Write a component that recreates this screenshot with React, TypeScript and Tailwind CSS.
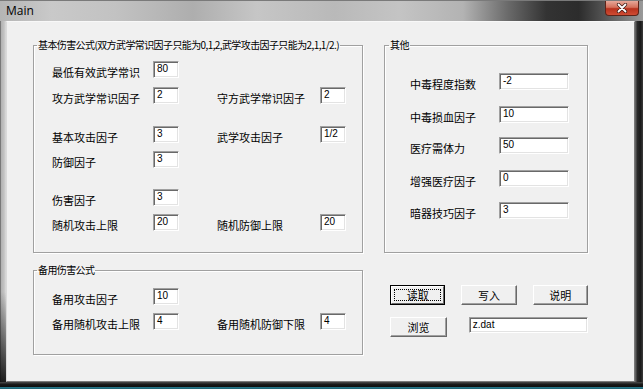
import React from "react"

const cjk = "font-['Noto_Sans_CJK_SC',sans-serif]"

function Edit({ value, wide }: { value: string; wide?: boolean }) {
  return (
    <div
      className={`${wide ? "w-[70px]" : "w-[26px]"} h-[17px] shrink-0 bg-white border border-t-[#a0a0a0] border-l-[#a0a0a0] border-b-white border-r-white shadow-[inset_1px_1px_0_#696969,inset_-1px_-1px_0_#e3e3e3] pl-[3px] pt-[1px] text-[10px] leading-[11px] text-black font-['Liberation_Sans',sans-serif]`}
    >
      {value}
    </div>
  )
}

function Label({ text, className }: { text: string; className: string }) {
  return <div className={`${className} shrink-0 h-[17px] pt-[6px] text-[11px] leading-[11px] text-black whitespace-nowrap ${cjk}`}>{text}</div>
}

function Row({ mt, l1, v1, l2, v2 }: { mt: string; l1: string; v1: string; l2?: string; v2?: string }) {
  return (
    <div className={`${mt} flex h-[17px]`}>
      <Label text={l1} className="w-[101px]" />
      <Edit value={v1} />
      {l2 && (
        <>
          <Label text={l2} className="ml-[38px] w-[103px]" />
          <Edit value={v2 ?? ""} />
        </>
      )}
    </div>
  )
}

function SideRow({ mt, label, value }: { mt: string; label: string; value: string }) {
  return (
    <div className={`${mt} flex h-[17px]`}>
      <Label text={label} className="w-[89px]" />
      <Edit value={value} wide />
    </div>
  )
}

function Btn({ text, focused }: { text: string; focused?: boolean }) {
  if (focused) {
    return (
      <div className="w-[61px] h-[20px] border border-black flex">
        <div className="flex-1 flex border border-t-white border-l-white border-b-[#696969] border-r-[#696969] bg-[#f0f0f0]">
          <div className={`flex-1 m-[2px] border border-dotted border-black flex items-center justify-center text-[11px] leading-[11px] ${cjk}`}>
            {text}
          </div>
        </div>
      </div>
    )
  }
  return (
    <div
      className={`w-[61px] h-[20px] flex items-center justify-center bg-[#f0f0f0] border border-t-white border-l-white border-b-[#696969] border-r-[#696969] shadow-[inset_-1px_-1px_0_#a0a0a0] text-[11px] leading-[11px] ${cjk}`}
    >
      {text}
    </div>
  )
}

const groupCls =
  "border border-[#a0a0a0] shadow-[inset_1px_1px_0_#fff,1px_1px_0_#fff] min-w-0 m-0"

function Legend({ text, ml }: { text: string; ml: string }) {
  return (
    <legend className={`${ml} px-[1px] text-[10px] leading-[12px] tracking-[-0.6px] text-black whitespace-nowrap ${cjk}`}>
      {text}
    </legend>
  )
}

export default function App() {
  return (
    <div className="w-[643px] h-[389px] flex flex-col bg-[#262626] overflow-hidden">
      {/* title bar */}
      <div className="h-[21px] shrink-0 flex justify-between bg-[linear-gradient(90deg,#b5b5b5_0%,#c9c9c9_8%,#c2c2c2_18%,#aeaeae_30%,#c6c6c6_40%,#b9b9b9_52%,#c4c4c4_62%,#b3b3b3_72%,#6a6a6a_79%,#333333_85%,#2c2c2c_90%,#555555_94%,#9a9a9a_100%)] border-t border-[#7a7a7a]">
        <div className="pl-[6px] pt-[2px] text-[12px] leading-[16px] text-black font-['Open_Sans',sans-serif]">Main</div>
        <div className="mr-[4px] w-[34px] h-[15px] flex items-center justify-center rounded-b-[4px] border border-t-0 border-[#5e2419] bg-[linear-gradient(180deg,#e6a899_0%,#d4705b_45%,#b8321d_55%,#cf4c33_100%)]">
          <svg width="12" height="10" viewBox="0 0 12 10">
            <path d="M2.5 1.5 L9.5 8.5 M9.5 1.5 L2.5 8.5" stroke="#3a1a14" strokeWidth="3.2" strokeLinecap="round" />
            <path d="M2.5 1.5 L9.5 8.5 M9.5 1.5 L2.5 8.5" stroke="#ffffff" strokeWidth="1.8" strokeLinecap="round" />
          </svg>
        </div>
      </div>

      <div className="flex-1 flex min-h-0">
        <div className="w-[6px] shrink-0 bg-[linear-gradient(180deg,rgba(0,0,0,0)_75%,rgba(10,10,10,0.9)_100%),linear-gradient(90deg,#5c5c5c_0%,#b4b4b4_25%,#c4c4c4_70%,#dcdcdc_100%)]" />

        {/* client area */}
        <div className="flex-1 flex bg-[#f0f0f0] border border-t-[#f8f8f8] border-l-[#dadada] border-r-[#7a7a7a] border-b-[#7a7a7a] pl-[26px] pt-[17px]">
          <div className="w-[330px] flex flex-col">
            <fieldset className={`${groupCls} h-[214px] pl-[18px]`}>
              <Legend text="基本伤害公式(双方武学常识因子只能为0,1,2,武学攻击因子只能为2,1,1/2.)" ml="-ml-[15px]" />
              <Row mt="mt-[10px]" l1="最低有效武学常识" v1="80" />
              <Row mt="mt-[9px]" l1="攻方武学常识因子" v1="2" l2="守方武学常识因子" v2="2" />
              <Row mt="mt-[22px]" l1="基本攻击因子" v1="3" l2="武学攻击因子" v2="1/2" />
              <Row mt="mt-[8px]" l1="防御因子" v1="3" />
              <Row mt="mt-[21px]" l1="伤害因子" v1="3" />
              <Row mt="mt-[8px]" l1="随机攻击上限" v1="20" l2="随机防御上限" v2="20" />
            </fieldset>
            <fieldset className={`${groupCls} mt-[11px] h-[91px] pl-[18px]`}>
              <Legend text="备用伤害公式" ml="-ml-[15px]" />
              <Row mt="mt-[12px]" l1="备用攻击因子" v1="10" />
              <Row mt="mt-[8px]" l1="备用随机攻击上限" v1="4" l2="备用随机防御下限" v2="4" />
            </fieldset>
          </div>

          <div className="ml-[21px] w-[204px] flex flex-col">
            <fieldset className={`${groupCls} h-[214px] pl-[25px]`}>
              <Legend text="其他" ml="-ml-[21px]" />
              <SideRow mt="mt-[22px]" label="中毒程度指数" value="-2" />
              <SideRow mt="mt-[16px]" label="中毒损血因子" value="10" />
              <SideRow mt="mt-[14px]" label="医疗需体力" value="50" />
              <SideRow mt="mt-[16px]" label="增强医疗因子" value="0" />
              <SideRow mt="mt-[15px]" label="暗器技巧因子" value="3" />
            </fieldset>

            <div className="mt-[32px] pl-[6px] flex gap-[16px]">
              <Btn text="读取" focused />
              <Btn text="写入" />
              <Btn text="说明" />
            </div>
            <div className="mt-[12px] pl-[6px] flex gap-[22px]">
              <Btn text="浏览" />
              <div className="w-[128px] h-[16px] bg-white border border-t-[#a0a0a0] border-l-[#a0a0a0] border-b-white border-r-white shadow-[inset_1px_1px_0_#696969,inset_-1px_-1px_0_#e3e3e3] pl-[3px] pt-[1px] text-[10px] leading-[11px] text-black font-['Liberation_Sans',sans-serif]">
                z.dat
              </div>
            </div>
          </div>
        </div>

        <div className="w-[8px] shrink-0 bg-[linear-gradient(90deg,#6e6e6e_0%,#2a2a2a_30%,#1a1a1a_70%,#3a3a3a_100%)]" />
      </div>

      <div className="h-[7px] shrink-0 bg-[linear-gradient(180deg,#4a4a4a_0%,#1a1a1a_35%,#111111_65%,#2a8296_80%,#1b5a68_100%)]" />
    </div>
  )
}
